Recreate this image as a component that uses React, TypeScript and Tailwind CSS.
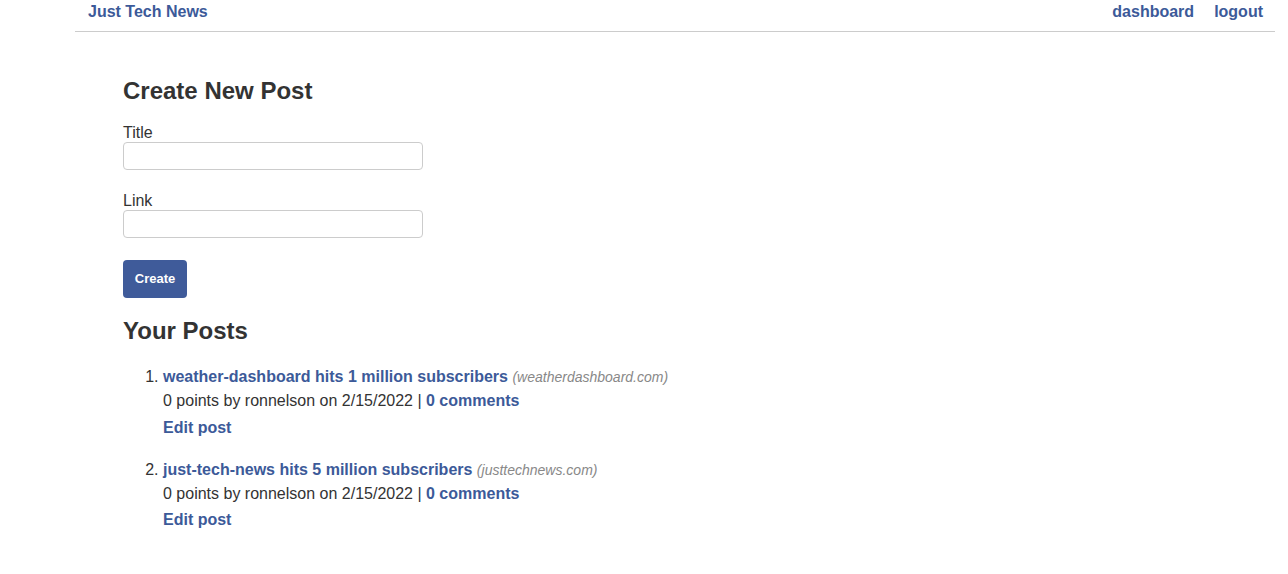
import React from 'react';

const posts = [
  { id: 1, title: 'weather-dashboard hits 1 million subscribers', domain: 'weatherdashboard.com' },
  { id: 2, title: 'just-tech-news hits 5 million subscribers', domain: 'justtechnews.com' },
];

const App: React.FC = () => {
  return (
    <div className="min-h-screen bg-white text-[#333] font-['Liberation_Sans',Arial,sans-serif]">
      <header className="ml-[75px] w-[1200px] h-[32px] border-b border-[#ccc] flex items-start justify-between pt-[3px] pl-[13px] pr-[12px]">
        <a className="text-[16px] leading-[18px] font-bold text-[#3c5a99]">Just Tech News</a>
        <nav className="flex gap-[20px]">
          <a className="text-[16px] leading-[18px] font-bold text-[#3c5a99]">dashboard</a>
          <a className="text-[16px] leading-[18px] font-bold text-[#3c5a99]">logout</a>
        </nav>
      </header>

      <main className="pl-[123px]">
        <h2 className="mt-[45px] text-[24px] leading-[28px] font-bold">Create New Post</h2>
        <form className="mt-[19px]">
          <label className="block text-[16px] leading-[18px]">Title</label>
          <input className="block w-[300px] h-[28px] border border-[#ccc] rounded-[4px] px-2" />
          <label className="mt-[22px] block text-[16px] leading-[18px]">Link</label>
          <input className="block w-[300px] h-[28px] border border-[#ccc] rounded-[4px] px-2" />
          <button
            type="button"
            className="mt-[22px] w-[64px] h-[38px] rounded-[4px] bg-[#3f5b9a] text-white text-[13px] font-bold"
          >
            Create
          </button>
        </form>

        <h2 className="mt-[19px] text-[24px] leading-[28px] font-bold">Your Posts</h2>
        <ol className="list-decimal pl-[40px] mt-[20px]">
          {posts.map((p, i) => (
            <li key={p.id} className={i > 0 ? 'mt-[18px]' : ''}>
              <div className="text-[16px] leading-[24px]">
                <a className="font-bold text-[#3c5a99]">{p.title}</a>{' '}
                <span className="italic text-[14px] text-[#888]">({p.domain})</span>
              </div>
              <div className="text-[16px] leading-[24px]">
                0 points by ronnelson on 2/15/2022 | <a className="font-bold text-[#3c5a99]">0 comments</a>
              </div>
              <a className={`block text-[16px] leading-[24px] font-bold text-[#3c5a99] ${i > 0 ? 'mt-[2px]' : 'mt-[3px]'}`}>Edit post</a>
            </li>
          ))}
        </ol>
      </main>
    </div>
  );
};

export default App;
